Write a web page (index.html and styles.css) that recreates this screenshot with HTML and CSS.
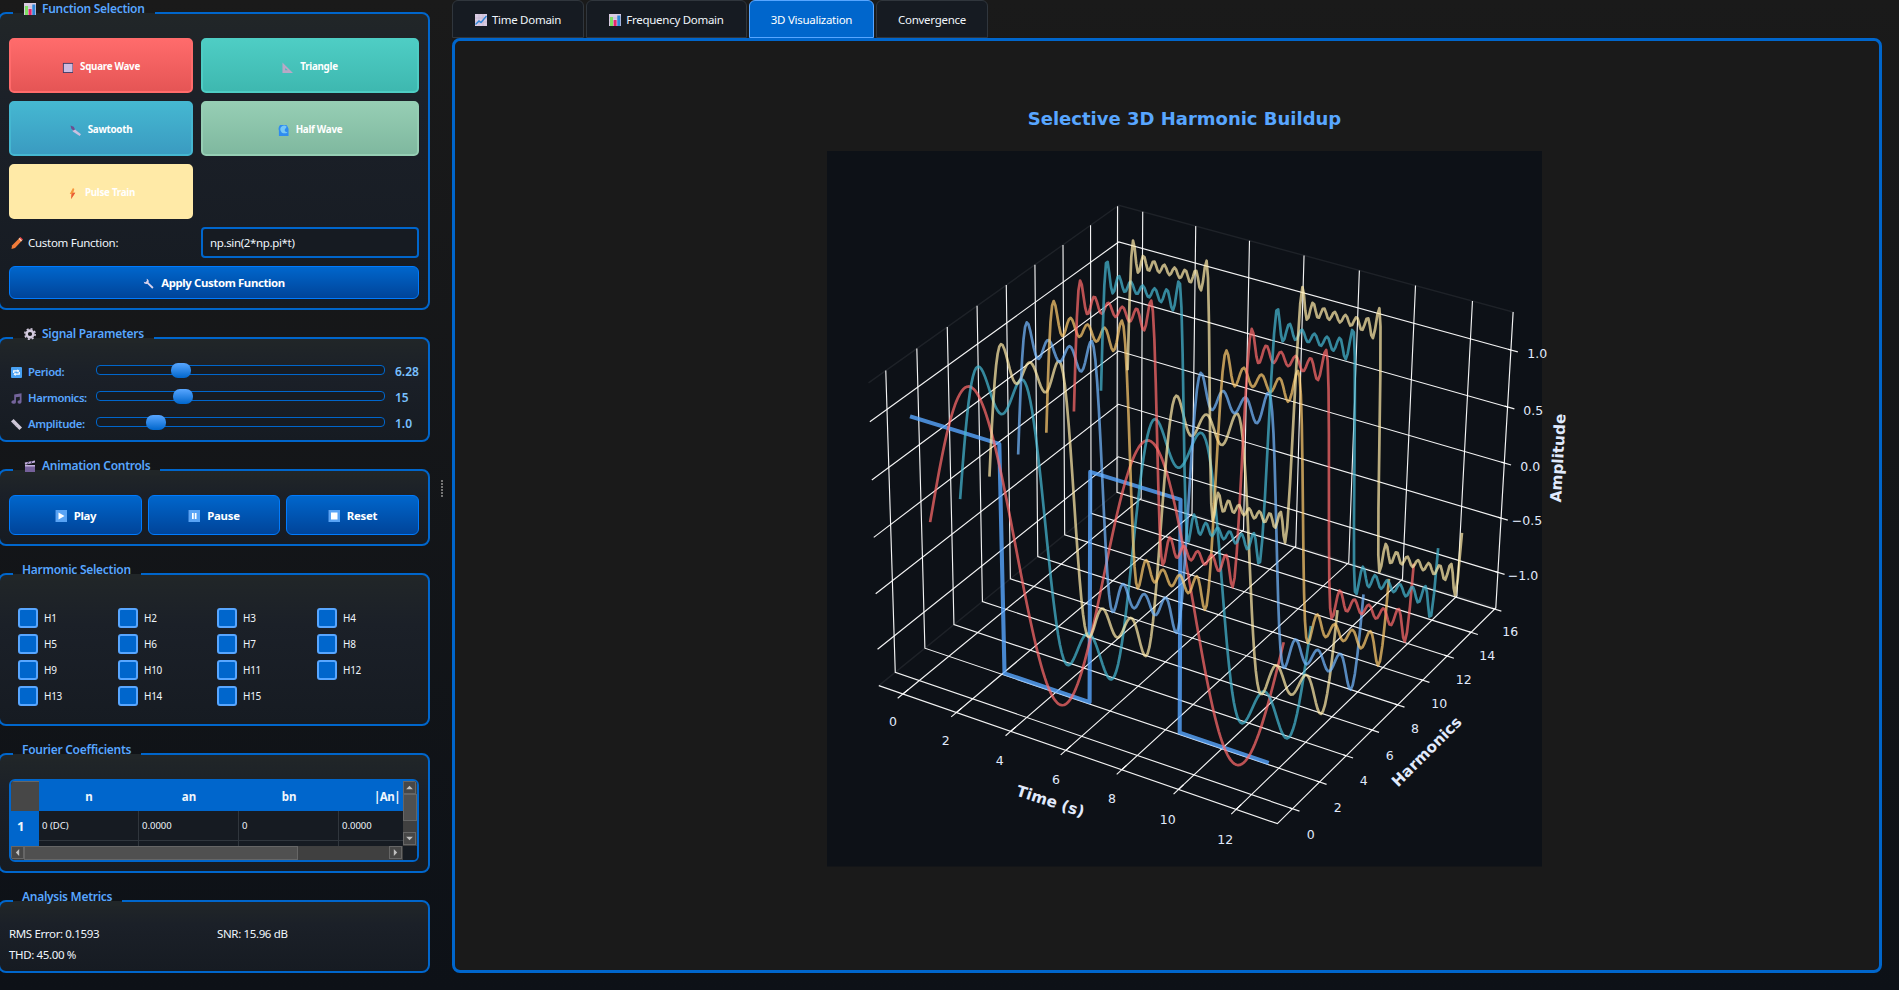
FILE: index.html
```html
<!DOCTYPE html>
<html lang="en">
<head>
<meta charset="utf-8">
<title>Fourier Series Analyzer</title>
<link rel="stylesheet" href="styles.css">
</head>
<body>
<svg class="defs" width="0" height="0">
  <symbol id="i-bars" viewBox="0 0 12 12"><path fill="#d9cbe2" d="M0 0h12v12H0z"/><path stroke="#b8a9c6" stroke-width=".5" d="M0 4h12M0 8h12"/><path fill="#7ddf64" d="M1 3h3v9H1z"/><path fill="#e8256d" d="M4.6 6h3v6h-3z"/><path fill="#2f86d8" d="M8.3 1.500h3V12h-3z"/></symbol>
  <symbol id="i-chart" viewBox="0 0 12 12"><path fill="#d9cbe2" d="M0 0h12v12H0z"/><path stroke="#b8a9c6" stroke-width=".5" d="M0 4h12M0 8h12M4 0v12M8 0v12"/><path fill="none" stroke="#2f86d8" stroke-width="1.400" d="M.5 10.500 4 7l2 1.500L11.500 2"/></symbol>
  <symbol id="i-square" viewBox="0 0 12 12"><path fill="#403a63" d="M1 1h11v11H1z"/><path fill="#cdbbe0" d="M2 2h9.500v9H2z"/></symbol>
  <symbol id="i-triangle" viewBox="0 0 12 12"><path fill="#b9a8c6" fill-rule="evenodd" d="M.5.5l11.500 11.500H.5zM3.500 6.500V9h2.800z"/></symbol>
  <symbol id="i-saw" viewBox="0 0 12 12"><path fill="#c9c0e0" d="M3 3l9 7-1.500 2L3 7z"/><path fill="#6b4f8f" d="M.5.5 4 2l1.500 3L3.500 6 1.500 4z"/></symbol>
  <symbol id="i-wave" viewBox="0 0 12 12"><path fill="#2f8cf0" d="M1 12V6a5 5 0 0 1 9.500-4l1 2V12z"/><path fill="#77c7f4" d="M3 6.500A4 4 0 0 1 9.500 2L8 4a2 2 0 0 0 3 3L9 9C5 9.500 3.500 8 3 6.500z"/></symbol>
  <symbol id="i-bolt" viewBox="0 0 12 12"><path fill="#f7963c" d="M6.500 0 3 6.500h2L4.500 12 9 5.200H6.800L8 1z"/><path fill="#e85a3a" d="M5 6.500 4.500 12 9 5.200H7z"/></symbol>
  <symbol id="i-pencil" viewBox="0 0 12 12"><path fill="#f07c3a" d="M9 0.500 11.500 3 4 11 .5 12 1 8.500z"/><path fill="#e8434a" d="M8.500.8 9.500 0 12 2.500 11 3.500z"/><path fill="#f6d4bd" d="M7.600 1.800 8.500 1 11 3.500l-.9.900z"/></symbol>
  <symbol id="i-wrench" viewBox="0 0 12 12"><path fill="#d9d2ec" d="M4 .8A3 3 0 0 1 6 5l5.500 5.200-1.400 1.600L4.600 6.400A3 3 0 0 1 .8 4l2 .6L4.300 3z"/></symbol>
  <symbol id="i-gear" viewBox="0 0 12 12"><circle cx="6" cy="6" r="3.400" fill="none" stroke="#d3cade" stroke-width="2.600"/><circle cx="6" cy="6" r="5.200" fill="none" stroke="#d3cade" stroke-width="1.500" stroke-dasharray="2.040 2.040"/></symbol>
  <symbol id="i-loop" viewBox="0 0 12 12"><rect width="12" height="12" rx="1" fill="#48a0f2"/><path fill="none" stroke="#fff" stroke-width="1.400" d="M3 6.500V4.300h5M9 5.500v2.300H4"/><path fill="#fff" d="M7 2.500 9.300 4.300 7 6zM5 6 2.700 7.800 5 9.700z"/></symbol>
  <symbol id="i-notes" viewBox="0 0 12 12"><path fill="#74649b" d="M3.500 1.500 11.500.3v9.500a2.200 1.900 0 1 1-1.900-1.900V4L5.400 4.600v5.400a2.500 2 0 1 1-1.900-2.100z"/></symbol>
  <symbol id="i-ruler" viewBox="0 0 12 12"><path fill="#cfc8d8" d="M2.800 0 12 9.200 9.200 12 0 2.800z"/><path stroke="#8e86a0" stroke-width=".6" d="m1.500 4.500 1-1m.7 2.700 1-1m.7 2.700 1-1m.8 2.700 1-1"/></symbol>
  <symbol id="i-clap" viewBox="0 0 12 12"><path fill="#75609a" d="M1 5h10v7H1z"/><path fill="#c3b0dc" d="M.8 2.600 11 .5v2L1 4.800zM1 5h10v1.500H1z"/><path stroke="#4b3d6c" d="m3.500 4.300 1-2.500M7 3.500 8 1"/></symbol>
  <symbol id="i-play" viewBox="0 0 12 12"><path fill="#58a3f5" d="M0 0h12v12H0z"/><path fill="#2d77cd" d="M0 0h1v12H0z"/><path fill="#fff" d="M3.500 2.500 9.500 6l-6 3.500z"/></symbol>
  <symbol id="i-pause" viewBox="0 0 12 12"><path fill="#58a3f5" d="M0 0h12v12H0z"/><path fill="#2d77cd" d="M0 0h1v12H0z"/><path fill="#fff" d="M4 3h1.700v6H4zM6.800 3h1.700v6H6.800z"/></symbol>
  <symbol id="i-stop" viewBox="0 0 12 12"><path fill="#58a3f5" d="M0 0h12v12H0z"/><path fill="#2d77cd" d="M0 0h1v12H0z"/><path fill="#fff" d="M3 2.500h6.500v7H3z"/></symbol>
</svg>
<div class="app">
  <aside class="side">
    <section class="group fn">
      <h2 class="legend"><svg class="ico"><use href="#i-bars"/></svg>Function Selection</h2>
      <div class="fn-grid">
        <button class="wave red"><svg class="ico"><use href="#i-square"/></svg>Square Wave</button>
        <button class="wave teal"><svg class="ico"><use href="#i-triangle"/></svg>Triangle</button>
        <button class="wave blue"><svg class="ico"><use href="#i-saw"/></svg>Sawtooth</button>
        <button class="wave green"><svg class="ico"><use href="#i-wave"/></svg>Half Wave</button>
        <button class="wave yellow"><svg class="ico"><use href="#i-bolt"/></svg>Pulse Train</button>
        <span></span>
        <label class="custom"><svg class="ico"><use href="#i-pencil"/></svg>Custom Function:</label>
        <div class="field">np.sin(2*np.pi*t)</div>
      </div>
      <button class="btn apply"><svg class="ico"><use href="#i-wrench"/></svg>Apply Custom Function</button>
    </section>

    <section class="group params">
      <h2 class="legend"><svg class="ico"><use href="#i-gear"/></svg>Signal Parameters</h2>
      <div class="param"><svg class="ico"><use href="#i-loop"/></svg><label>Period:</label><div class="track"><i class="knob k1"></i></div><b>6.28</b></div>
      <div class="param"><svg class="ico"><use href="#i-notes"/></svg><label>Harmonics:</label><div class="track"><i class="knob k2"></i></div><b>15</b></div>
      <div class="param"><svg class="ico"><use href="#i-ruler"/></svg><label>Amplitude:</label><div class="track"><i class="knob k3"></i></div><b>1.0</b></div>
    </section>

    <section class="group anim">
      <h2 class="legend"><svg class="ico"><use href="#i-clap"/></svg>Animation Controls</h2>
      <div class="anim-row">
        <button class="btn"><svg class="ico"><use href="#i-play"/></svg>Play</button>
        <button class="btn"><svg class="ico"><use href="#i-pause"/></svg>Pause</button>
        <button class="btn"><svg class="ico"><use href="#i-stop"/></svg>Reset</button>
      </div>
    </section>

    <section class="group harm">
      <h2 class="legend plain">Harmonic Selection</h2>
      <div class="checks">
        <span><i></i>H1</span><span><i></i>H2</span><span><i></i>H3</span><span><i></i>H4</span>
        <span><i></i>H5</span><span><i></i>H6</span><span><i></i>H7</span><span><i></i>H8</span>
        <span><i></i>H9</span><span><i></i>H10</span><span><i></i>H11</span><span><i></i>H12</span>
        <span><i></i>H13</span><span><i></i>H14</span><span><i></i>H15</span>
      </div>
    </section>

    <section class="group coef">
      <h2 class="legend plain">Fourier Coefficients</h2>
      <div class="table">
        <div class="cells">
          <div class="corner"></div><div class="th">n</div><div class="th">an</div><div class="th">bn</div><div class="th last">|An|</div>
          <div class="rowno">1</div><div class="td">0 (DC)</div><div class="td">0.0000</div><div class="td">0</div><div class="td last">0.0000</div>
          <div class="rowno"></div><div class="td"></div><div class="td"></div><div class="td"></div><div class="td last"></div>
        </div>
        <div class="vbar"><svg class="arrow" viewBox="0 0 13 13"><path d="m2.500 8.500 4-4 4 4z"/></svg><i></i><svg class="arrow" viewBox="0 0 13 13"><path d="m2.500 4.500 4 4 4-4z"/></svg></div>
        <div class="hbar"><svg class="arrow" viewBox="0 0 13 13"><path d="m8.500 2.500-4 4 4 4z"/></svg><i></i><svg class="arrow" viewBox="0 0 13 13"><path d="m4.500 2.500 4 4-4 4z"/></svg></div>
        <div class="notch"></div>
      </div>
    </section>

    <section class="group metrics">
      <h2 class="legend plain">Analysis Metrics</h2>
      <div class="metric-grid"><span>RMS Error: 0.1593</span><span>SNR: 15.96 dB</span><span>THD: 45.00 %</span></div>
    </section>
  </aside>

  <div class="splitter"></div>

  <main class="main">
    <nav class="tabs">
      <div class="tab t1"><svg class="ico"><use href="#i-chart"/></svg><span>Time Domain</span></div>
      <div class="tab t2"><svg class="ico"><use href="#i-bars"/></svg><span>Frequency Domain</span></div>
      <div class="tab t3 active"><span>3D Visualization</span></div>
      <div class="tab t4"><span>Convergence</span></div>
    </nav>
    <div class="pane">
      <svg id="plot" class="plot" viewBox="455 41 1424 928" width="1424" height="928"></svg>
    </div>
  </main>
</div>
<script src="plot.js"></script>
</body>
</html>
```

FILE: plot.js
```js
const NS = 'http://www.w3.org/2000/svg';
const plot = document.getElementById('plot');

function add(tag, attrs, text) {
  const el = document.createElementNS(NS, tag);
  for (const k in attrs) el.setAttribute(k, attrs[k]);
  if (text) el.textContent = text;
  plot.appendChild(el);
  return el;
}

// Axis limits and perspective basis, in homogeneous coordinates about the far lower corner.
const XL = [-0.912, 13.41], YL = [-1.094, 16.094], ZL = [-1.333, 1.329];
const O = [1118.2, 491.3];
const BX = [359.36, 111.06, -0.0483];
const BY = [-220.46, 178.93, -0.0791];
const BZ = [0.576, -274.47, -0.0403];

function project(x, y, z) {
  const u = (x - XL[0]) / (XL[1] - XL[0]);
  const q = (YL[1] - y) / (YL[1] - YL[0]);
  const s = (z - ZL[0]) / (ZL[1] - ZL[0]);
  const w = 1 + u * BX[2] + q * BY[2] + s * BZ[2];
  return [O[0] + (u * BX[0] + q * BY[0] + s * BZ[0]) / w,
          O[1] + (u * BX[1] + q * BY[1] + s * BZ[1]) / w];
}

function line(points, cls) {
  const d = points.map(p => project(...p).map(v => v.toFixed(2)).join(',')).join(' ');
  return add('polyline', { points: d, class: cls });
}

add('rect', { x: 827, y: 151, width: 715, height: 715.5, class: 'axes-bg' });

const [x0, x1] = XL, [y0, y1] = YL, [z0, z1] = ZL;
line([[x0, y0, z0], [x0, y1, z0], [x1, y1, z0], [x1, y1, z1], [x0, y1, z1], [x0, y0, z1]], 'edge');
line([[x0, y1, z0], [x0, y1, z1]], 'edge');

const xt = [0, 2, 4, 6, 8, 10, 12], yt = [0, 2, 4, 6, 8, 10, 12, 14, 16], zt = [-1, -0.5, 0, 0.5, 1];
xt.forEach(x => line([[x, y0, z0], [x, y1, z0], [x, y1, z1]], 'grid'));
yt.forEach(y => line([[x1, y, z0], [x0, y, z0], [x0, y, z1]], 'grid'));
zt.forEach(z => line([[x0, y0, z], [x0, y1, z], [x1, y1, z]], 'grid'));
line([[x0, y0, z0], [x1, y0, z0], [x1, y1, z0], [x1, y1, z1]], 'grid');
xt.forEach(x => line([[x, y0 + 0.35, z0], [x, y0 - 0.35, z0]], 'grid'));
yt.forEach(y => line([[x1 - 0.1, y, z0], [x1 + 0.24, y, z0]], 'grid'));
zt.forEach(z => line([[x1 - 0.1, y1, z], [x1 + 0.24, y1, z]], 'grid'));

// Square wave, then partial sums over the odd harmonics, on 200 samples of two periods.
const P = 6.28, N = 200, DT = 2 * P / N, END = DT * (N - 1);
line([[0, 0, 1], [3.14, 0, 1], [3.203, 0, -1], [6.29, 0, -1], [6.33, 0, 1], [9.42, 0, 1], [9.483, 0, -1], [END, 0, -1]], 'square');
const colors = ['#ff6b6b', '#45b7d1', '#ffeaa7', '#74b9ff', '#fdcb6e', '#ff6b6b', '#45b7d1', '#ffeaa7'];
colors.forEach((c, i) => {
  const n = 2 * i + 1, pts = [];
  for (let j = 0; j < N; j++) {
    const t = DT * j;
    let z = 0;
    for (let k = 1; k <= n; k += 2) z += 4 / (Math.PI * k) * Math.sin(2 * Math.PI * k * t / P);
    pts.push([t, n, z]);
  }
  line(pts, 'curve').setAttribute('stroke', c);
});

const label = (x, y, s) => add('text', { x, y: y + 4.6, class: 'tick' }, s);
[[893, 721.7], [945.7, 740.7], [999.7, 760], [1056, 779.7], [1112, 798.7], [1167.7, 819], [1225.3, 839]]
  .forEach(([x, y], i) => label(x, y, String(xt[i])));
[[1310.7, 834.7], [1337.7, 807], [1363.7, 780.7], [1389.7, 755], [1415, 728.7], [1439.3, 703.7], [1463.7, 679.7], [1487.3, 655.7], [1510.3, 631.7]]
  .forEach(([x, y], i) => label(x, y, String(yt[i])));
[[1523, 575.7, '−1.0'], [1527, 520.7, '−0.5'], [1530.3, 466.7, '0.0'], [1533.3, 410.7, '0.5'], [1537.3, 353.7, '1.0']]
  .forEach(a => label(...a));

const title = (x, y, rot, s) => add('text', { x: 0, y: 5.5, class: 'axis', transform: `translate(${x} ${y}) rotate(${rot})` }, s);
title(1050.5, 801, 18, 'Time (s)');
title(1426.5, 751.5, -45, 'Harmonics');
title(1557.800, 458, -87, 'Amplitude');
add('text', { x: 1184.5, y: 125, class: 'title' }, 'Selective 3D Harmonic Buildup');
```

FILE: styles.css
```css
* { box-sizing: border-box; }
body {
  margin: 0; width: 1899px; height: 990px; overflow: hidden;
  background: linear-gradient(#1a1a1a, #0d1117);
  color: #f0f6fc; font: 11.5px/16px "Noto Sans", "Open Sans", sans-serif; letter-spacing: -.28px;
}
.defs { position: absolute; }
.app { display: flex; height: 990px; }
.side { width: 430px; padding-top: 12px; }
.ico { width: 12px; height: 12px; flex: none; display: block; }
button { font: inherit; letter-spacing: inherit; color: #fff; margin: 0; padding: 0; }

.group {
  position: relative; width: 432px; margin-left: -2px; padding: 0 9px 0 9px;
  border: 2px solid #0066cc; border-radius: 8px;
  background: linear-gradient(#212628, #1b2028 33%, #161b22);
}
.legend {
  position: absolute; left: 13px; top: -14px; margin: 0; padding: 0 10px 0 11px;
  display: flex; align-items: flex-start; gap: 6px;
  font-size: 12px; font-weight: 600; color: #58a6ff; line-height: 18px; white-space: nowrap;
  letter-spacing: -.28px;
  background: linear-gradient(transparent 12px, var(--page) 12px 13px, #212628 13px);
}
.legend .ico { margin-top: 3px; }
.legend.plain { padding-left: 9px; }
.fn { --page: #1a1a1a; height: 298px; padding-top: 24px; }
.params { --page: #161718; height: 105px; margin-top: 27px; padding-top: 17px; }
.anim { --page: #141618; height: 77px; margin-top: 27px; padding-top: 24px; }
.harm { --page: #121518; height: 153px; margin-top: 27px; padding-top: 33px; }
.coef { --page: #101317; height: 120px; margin-top: 27px; padding-top: 24px; }
.metrics { --page: #0e1217; height: 73px; margin-top: 27px; padding-top: 24px; }

.fn-grid { display: grid; grid-template-columns: 184px 218px; grid-template-rows: 55px 55px 55px 31px; gap: 8px; }
.wave {
  display: flex; align-items: center; justify-content: center; gap: 7px;
  border: 2px solid; border-radius: 5px; font-size: 9.8px; font-weight: 700; padding-top: 3px;
}
.wave .ico { width: 11px; height: 11px; }
.red { background: linear-gradient(#ff6b6b, #e55555); border-color: #ff6b6b; }
.teal { background: linear-gradient(#4ecdc4, #3eb8b0); border-color: #4ecdc4; }
.blue { background: linear-gradient(#45b7d1, #3a9bc1); border-color: #45b7d1; }
.green { background: linear-gradient(#96ceb4, #7fb89f); border-color: #96ceb4; }
.yellow { background: #ffeaa7; border-color: #ffeaa7; }
.custom { display: flex; align-items: center; gap: 5px; padding-left: 2px; }
.field { border: 2px solid #0066cc; border-radius: 4px; background: #161b22; padding: 6px 7px; letter-spacing: -.35px; }
.btn {
  display: flex; align-items: center; justify-content: center; gap: 7px;
  border: 1px solid #007bff; border-radius: 6px; background: linear-gradient(#0066cc, #004499);
  font-size: 11.4px; font-weight: 700;
}
.apply { width: 410px; height: 33px; margin-top: 8px; padding-top: 1px; letter-spacing: -.38px; }
.apply .ico { width: 11px; height: 11px; }

.param { display: grid; grid-template-columns: 12px 73px 289px 1fr; align-items: center; height: 26px; padding: 2px 0 0 2px; }
.param .ico { width: 11px; height: 11px; margin-top: 4px; }
.param label { padding-left: 5px; margin-top: 4px; color: #58a6ff; font-weight: 600; font-size: 11.3px; letter-spacing: -.38px; }
.param b { padding-left: 10px; color: #79c0ff; font-size: 12px; font-weight: 600; margin-top: 3px; letter-spacing: 0; }
.track { position: relative; height: 10px; border: 1px solid #0066cc; border-radius: 4px; background: #161b22; }
.knob { position: absolute; top: -3.5px; width: 20px; height: 15px; border-radius: 7px; background: linear-gradient(#58a6ff, #0066cc); }
.k1 { left: 74px; } .k2 { left: 76px; } .k3 { left: 49px; }

.anim-row { display: grid; grid-template-columns: 133px 132px 133px; gap: 6px; }
.anim-row .btn { height: 40px; padding-top: 1px; }

.checks { display: grid; grid-template-columns: 100px 99px 100px 1fr; grid-auto-rows: 20px; row-gap: 6px; padding-left: 9px; font-size: 10px; }
.checks span { display: flex; align-items: center; gap: 6px; }
.checks i { width: 20px; height: 20px; border: 2px solid #58a6ff; border-radius: 3px; background: #0066cc; }

.table {
  display: grid; grid-template-columns: 392px 14px; grid-template-rows: 65px 14px; width: 410px; height: 83px;
  border: 2px solid #0066cc; border-radius: 6px; overflow: hidden; background: #161b22;
}
.cells { display: grid; grid-template-columns: 28px 100px 100px 100px 64px; grid-template-rows: 30px 30px 5px; height: 65px; overflow: hidden; letter-spacing: 0; }
.corner { background: #474747; border-top: 1px solid #666; }
.th, .rowno { background: #0066cc; font-weight: 700; display: flex; align-items: center; justify-content: center; padding-top: 2px; }
.th.last { justify-content: flex-end; padding-right: 3px; letter-spacing: -.5px; }
.rowno { justify-content: flex-start; padding: 0 0 0 6px; font-size: 13px; }
.td { border: solid #30363d; border-width: 0 1px 1px 0; padding: 7px 3px 0; font-size: 9.5px; overflow: hidden; }
.td.last { border-right: 0; }
.td:empty { padding: 0; border-bottom: 0; }
.vbar, .hbar { background: #404040; display: flex; }
.vbar { flex-direction: column; }
.vbar i { height: 27px; margin-bottom: 11px; background: #505050; border: 1px solid #666; }
.hbar i { width: 274px; margin-right: 91px; background: #505050; border: 1px solid #666; }
.arrow { width: 13px; height: 13px; background: #474747; border: 1px solid #666; fill: #c0c0c0; flex: none; }
.notch { background: #161b22; }

.metric-grid { display: grid; grid-template-columns: 208px 1fr; row-gap: 5px; letter-spacing: -.36px; }

.splitter { width: 22px; position: relative; }
.splitter::after {
  content: ""; position: absolute; left: 11px; top: 480px; width: 2px; height: 17px;
  background: repeating-linear-gradient(#747474 0 2px, transparent 2px 3px);
}

.main { width: 1430px; }
.tabs { display: flex; gap: 2px; height: 38px; }
.tab {
  display: flex; align-items: center; justify-content: center; gap: 5px; height: 38px;
  border: 1px solid #30363d; border-radius: 6px 6px 0 0; background: #161b22; padding-top: 2px;
}
.tab.active { background: #0066cc; border-color: #58a6ff; color: #fff; }
.t1 { width: 132px; } .t2 { width: 161px; } .t3 { width: 125px; } .t4 { width: 112px; }
.pane { height: 935px; border: 3px solid #0066cc; border-radius: 8px; background: #1a1a1a; overflow: hidden; }
.plot { display: block; }
.axes-bg { fill: #0d1117; }
.edge { fill: none; stroke: #1e2228; stroke-width: 1.4; }
.grid { fill: none; stroke: #fff; stroke-width: 1.15; stroke-opacity: .95; }
.square { fill: none; stroke: #58a6ff; stroke-width: 4.1; stroke-opacity: .8; stroke-linecap: square; stroke-linejoin: round; }
.curve { fill: none; stroke-width: 2.7; stroke-opacity: .72; stroke-linejoin: round; stroke-linecap: square; }
.tick, .axis, .title { font-family: "DejaVu Sans", sans-serif; letter-spacing: 0; text-anchor: middle; fill: #e0eafc; }
.tick { font-size: 12.5px; }
.axis { font-size: 15.3px; font-weight: 700; }
.title { font-size: 18px; font-weight: 700; fill: #58a6ff; }
```
